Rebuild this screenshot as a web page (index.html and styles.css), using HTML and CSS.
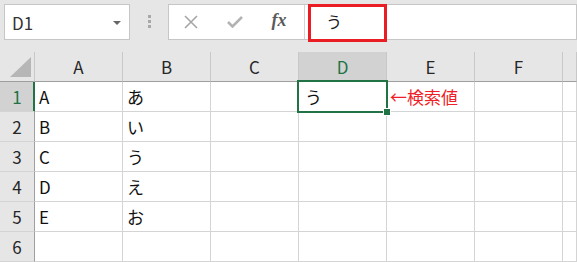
FILE: index.html
```html
<!DOCTYPE html>
<html lang="ja">
<head>
    <meta charset="UTF-8">
    <title>検索値</title>
    <link rel="stylesheet" href="styles.css">
</head>
<body>
    <div class="toolbar">
        <div class="name-box">
            <span>D1</span>
            <i class="caret"></i>
        </div>
        <div class="grip"><i></i><i></i><i></i></div>
        <div class="formula-bar">
            <div class="fx-buttons">
                <span class="fx-btn">
                    <svg width="14" height="14" viewBox="0 0 14 14"><path d="M1 1L13 13M13 1L1 13" stroke="#a6a6a6" stroke-width="1.6" fill="none"/></svg>
                </span>
                <span class="fx-btn">
                    <svg width="16" height="12" viewBox="0 0 16 12"><path d="M1 6L5.5 10.5L15 1" stroke="#b3b3b3" stroke-width="2.6" fill="none"/></svg>
                </span>
                <span class="fx-btn fx-text">fx</span>
            </div>
            <div class="formula-input">
                <span class="formula-value">う</span>
                <div class="mark"></div>
            </div>
        </div>
    </div>

    <div class="sheet">
        <div class="corner"><i></i></div>
        <div class="col-head">A</div>
        <div class="col-head">B</div>
        <div class="col-head">C</div>
        <div class="col-head active">D</div>
        <div class="col-head">E</div>
        <div class="col-head">F</div>
        <div class="col-head"></div>

        <div class="row-head active">1</div>
        <div class="cell">A</div>
        <div class="cell">あ</div>
        <div class="cell"></div>
        <div class="cell selected">う<span class="sel-frame"><i class="handle"></i></span></div>
        <div class="cell note">←検索値</div>
        <div class="cell"></div>
        <div class="cell"></div>

        <div class="row-head">2</div>
        <div class="cell">B</div>
        <div class="cell">い</div>
        <div class="cell"></div>
        <div class="cell"></div>
        <div class="cell"></div>
        <div class="cell"></div>
        <div class="cell"></div>

        <div class="row-head">3</div>
        <div class="cell">C</div>
        <div class="cell">う</div>
        <div class="cell"></div>
        <div class="cell"></div>
        <div class="cell"></div>
        <div class="cell"></div>
        <div class="cell"></div>

        <div class="row-head">4</div>
        <div class="cell">D</div>
        <div class="cell">え</div>
        <div class="cell"></div>
        <div class="cell"></div>
        <div class="cell"></div>
        <div class="cell"></div>
        <div class="cell"></div>

        <div class="row-head">5</div>
        <div class="cell">E</div>
        <div class="cell">お</div>
        <div class="cell"></div>
        <div class="cell"></div>
        <div class="cell"></div>
        <div class="cell"></div>
        <div class="cell"></div>

        <div class="row-head">6</div>
        <div class="cell"></div>
        <div class="cell"></div>
        <div class="cell"></div>
        <div class="cell"></div>
        <div class="cell"></div>
        <div class="cell"></div>
        <div class="cell"></div>
    </div>
</body>
</html>
```

FILE: styles.css
```css
* {
    box-sizing: border-box;
}
body {
    margin: 0;
    background: #e6e6e6;
    font-family: "Noto Sans CJK JP", "Noto Sans", sans-serif;
    font-size: 17px;
    color: #1a1a1a;
    overflow: hidden;
}
.toolbar {
    display: flex;
    height: 52px;
    padding: 4px 0 0 4px;
}
.name-box {
    width: 126px;
    height: 36px;
    background: white;
    border: 1px solid #c6c6c6;
    display: flex;
    align-items: center;
    justify-content: space-between;
    padding: 0 8px 0 7px;
    color: #333;
}
.caret {
    width: 0;
    height: 0;
    border-left: 4px solid transparent;
    border-right: 4px solid transparent;
    border-top: 4px solid #666;
    margin-top: 1px;
}
.grip {
    width: 38px;
    display: flex;
    flex-direction: column;
    align-items: center;
    gap: 2px;
    padding-top: 11px;
}
.grip i {
    width: 3px;
    height: 3px;
    background: #a8a8a8;
}
.formula-bar {
    flex: 1;
    height: 36px;
    background: white;
    border: 1px solid #c6c6c6;
    display: flex;
}
.fx-buttons {
    width: 136px;
    display: flex;
    border-right: 1px solid #d4d4d4;
}
.fx-btn {
    width: 44px;
    display: flex;
    align-items: center;
    justify-content: center;
}
.fx-text {
    font-family: "Liberation Serif", serif;
    font-style: italic;
    font-weight: bold;
    font-size: 18px;
    color: #5a5a5a;
    padding-bottom: 3px;
}
.formula-input {
    flex: 1;
    position: relative;
    display: flex;
    align-items: center;
    padding-left: 21px;
}
.formula-value {
    font-size: 16px;
    margin-top: -2px;
}
.mark {
    position: absolute;
    left: 3px;
    top: -1px;
    width: 79px;
    height: 38px;
    border: 3px solid #ea1c24;
}
.sheet {
    display: grid;
    grid-template-columns: 35px repeat(6, 88px) 1fr;
    grid-auto-rows: 30px;
}
.corner {
    border-right: 1px solid #c8c8c8;
    border-bottom: 1px solid #9f9f9f;
    position: relative;
}
.corner i {
    position: absolute;
    left: 10px;
    top: 5px;
    width: 0;
    height: 0;
    border-left: 21px solid transparent;
    border-bottom: 20px solid #b6b6b6;
}
.col-head {
    border-right: 1px solid #c8c8c8;
    border-bottom: 1px solid #9f9f9f;
    text-align: center;
    line-height: 29px;
    color: #262626;
}
.col-head.active {
    background: #d2d2d2;
    color: #217346;
}
.row-head {
    border-right: 1px solid #9f9f9f;
    border-bottom: 1px solid #d4d4d4;
    text-align: center;
    line-height: 29px;
    color: #262626;
}
.row-head.active {
    background: #d2d2d2;
    color: #217346;
    border-right-color: #217346;
    box-shadow: inset -1px 0 0 #217346;
}
.cell {
    background: white;
    border-right: 1px solid #d4d4d4;
    border-bottom: 1px solid #d4d4d4;
    line-height: 29px;
    padding-left: 4px;
    white-space: nowrap;
    color: #111;
}
.cell.selected {
    position: relative;
    padding-left: 6px;
}
.cell.note {
    color: #f01e28;
    padding-left: 3px;
}
.sel-frame {
    position: absolute;
    left: -2px;
    top: -2px;
    width: 91px;
    height: 33px;
    border: 2px solid #217346;
    z-index: 2;
}
.handle {
    position: absolute;
    right: -4px;
    bottom: -4px;
    width: 6px;
    height: 6px;
    background: #217346;
    outline: 1px solid white;
}
```
